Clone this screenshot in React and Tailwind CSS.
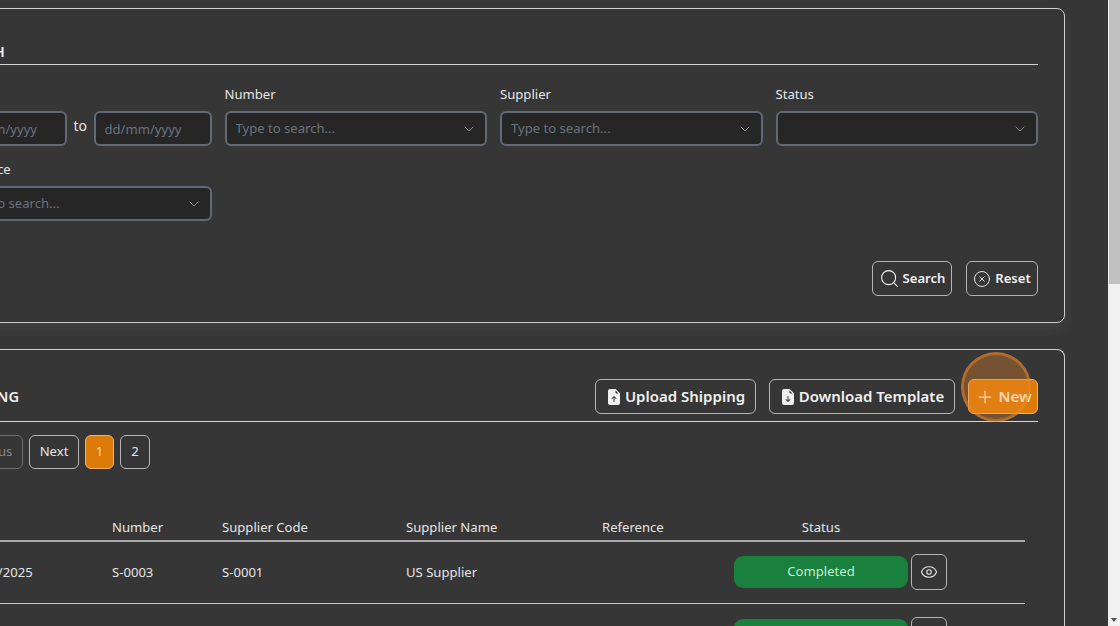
import React from "react";
import { ChevronDown, Plus, Search, CircleX, Eye } from "lucide-react";
import { BsFileEarmarkArrowUpFill, BsFileEarmarkArrowDownFill } from "react-icons/bs";

function Combo({ label, placeholder }) {
  return (
    <div className="flex flex-col">
      <label className="h-[28px] pt-[1px] text-[13.1px] leading-[20px] text-[#e5e5e5]">{label}</label>
      <div className="flex h-[35px] items-center justify-between rounded-md border-2 border-[#636974] bg-[#262626] pl-[9px] pr-[8px]">
        <span className="truncate text-[13.1px] text-[#6b7280]">{placeholder}</span>
        <ChevronDown size={16} strokeWidth={1.5} className="shrink-0 text-[#8e8e8e]" />
      </div>
    </div>
  );
}

function DateBox() {
  return (
    <input
      placeholder="dd/mm/yyyy"
      className="h-[35px] w-[118px] min-w-0 rounded-md border-2 border-[#636974] bg-[#262626] px-[9px] text-[13.1px] text-[#e5e5e5] outline-none placeholder:text-[#6b7280]"
    />
  );
}

function OutlineBtn({ children, className = "" }) {
  return (
    <button className={`flex h-[35px] items-center justify-center rounded-md border border-[#b5b5b5] font-semibold text-[#f0f0f0] ${className}`}>
      {children}
    </button>
  );
}

function Row({ date, number, code, name, first }) {
  const text = "pt-[13px] pb-[12px] px-2";
  const pad = first ? "pt-3 pb-[13px]" : "pt-[13px] pb-[13px]";
  return (
    <tr className="border-b border-[#c9c9c9]">
      <td className={`${text} !pl-[14px]`}>{date}</td>
      <td className={text}>{number}</td>
      <td className={text}>{code}</td>
      <td className={text}>{name}</td>
      <td className={text}></td>
      <td className={`${pad} pl-2`}>
        <div className="flex h-[32px] items-center justify-center rounded-[9px] bg-[#19803d] pt-px text-[#c4eed2]">Completed</div>
      </td>
      <td className={`${pad} pl-[3px]`}>
        <button className="flex h-[36px] w-[36px] items-center justify-center rounded-md border border-[#b5b5b5] text-[#e5e5e5]">
          <Eye size={18} strokeWidth={1.5} />
        </button>
      </td>
      <td></td>
    </tr>
  );
}

export default function App() {
  return (
    <div className="flex h-[626px] w-[1120px] overflow-hidden bg-[#363636] text-[13.1px] text-[#e5e5e5] [font-family:'Noto_Sans',sans-serif]">
      <main className="h-full min-w-0 flex-1 overflow-hidden">
        <div className="ml-[-78px] mr-[43px] flex flex-col gap-[26px] pt-2">
          <section className="rounded-lg border border-[#cfcfcf] px-[26px] pb-[26px] pt-[26px] shadow-[0_6px_14px_rgba(255,255,255,0.07)]">
            <h2 className="h-[30px] border-b border-[#d4d4d4] text-[14.6px] font-semibold leading-[32px] text-[#f0f0f0]">SEARCH</h2>
            <div className="mt-[18px] grid grid-cols-4 gap-x-[13px] gap-y-[12px]">
              <div className="flex flex-col">
                <label className="h-[28px] pt-[1px] leading-[20px]">Date</label>
                <div className="flex items-center justify-between">
                  <DateBox />
                  <span className="pb-[7px] text-[14px]">to</span>
                  <DateBox />
                </div>
              </div>
              <Combo label="Number" placeholder="Type to search..." />
              <Combo label="Supplier" placeholder="Type to search..." />
              <Combo label="Status" placeholder="" />
              <Combo label="Reference" placeholder="Type to search..." />
            </div>
            <div className="mt-[40px] flex justify-end gap-[14px]">
              <OutlineBtn className="w-[80px] gap-[3px] text-[13.1px]"><Search size={21} strokeWidth={1.25} />Search</OutlineBtn>
              <OutlineBtn className="w-[72px] gap-[4px] text-[13.1px]"><CircleX size={18} strokeWidth={1.25} />Reset</OutlineBtn>
            </div>
          </section>

          <section className="rounded-t-lg border border-b-0 border-[#cfcfcf] px-[26px] pt-[29px]">
            <div className="flex items-center justify-between border-b border-[#d4d4d4] pb-[7px]">
              <h2 className="text-[14.6px] font-semibold text-[#f0f0f0]">SHIPPING</h2>
              <div className="flex gap-[13px] text-[15px]">
                <OutlineBtn className="w-[161px] gap-[3px]"><BsFileEarmarkArrowUpFill size={16} />Upload Shipping</OutlineBtn>
                <OutlineBtn className="w-[186px] gap-[3px]"><BsFileEarmarkArrowDownFill size={16} />Download Template</OutlineBtn>
                <button className="flex h-[35px] w-[70px] items-center justify-center gap-[4px] rounded-md border border-[#eeb46e] bg-[#dd7b08] font-semibold text-white">
                  <Plus size={20} strokeWidth={1.5} />New
                </button>
              </div>
            </div>
            <div className="mt-[13px] flex gap-[6px]">
              <button className="h-[34px] w-[74px] rounded-md border border-[#6f6f6f] text-[#8a8a8a]">Previous</button>
              <button className="h-[34px] w-[50px] rounded-md border border-[#b5b5b5]">Next</button>
              <button className="h-[34px] w-[29px] rounded-md border border-[#eeb46e] bg-[#dd7b08] text-[#f7dcc0]">1</button>
              <button className="h-[34px] w-[30px] rounded-md border border-[#b5b5b5]">2</button>
            </div>
            <table className="mt-[49px] w-[1076px] table-fixed border-collapse text-left">
              <colgroup>
                <col className="w-[155px]" />
                <col className="w-[110px]" />
                <col className="w-[184px]" />
                <col className="w-[196px]" />
                <col className="w-[132px]" />
                <col className="w-[182px]" />
                <col className="w-[39px]" />
                <col />
              </colgroup>
              <thead>
                <tr className="border-b-2 border-[#a8a8a8]">
                  <th className="pb-[2px] pl-[14px] pr-2 font-normal">Date</th>
                  <th className="px-2 pb-[2px] font-normal">Number</th>
                  <th className="px-2 pb-[2px] font-normal">Supplier Code</th>
                  <th className="px-2 pb-[2px] font-normal">Supplier Name</th>
                  <th className="px-2 pb-[2px] font-normal">Reference</th>
                  <th className="pb-[2px] pl-2 text-center font-normal">Status</th>
                  <th></th>
                  <th></th>
                </tr>
              </thead>
              <tbody>
                <Row first date="12/05/2025" number="S-0003" code="S-0001" name="US Supplier" />
                <Row date="12/05/2025" number="S-0002" code="S-0001" name="US Supplier" />
              </tbody>
            </table>
          </section>
        </div>
      </main>

      <div className="relative h-full w-[12px] shrink-0 bg-[#f1f1f1] pl-px">
        <div className="h-[284px] bg-[#c1c1c1]"></div>
        <div className="absolute bottom-[4px] left-[3px] h-0 w-0 border-x-[3px] border-t-[4px] border-x-transparent border-t-[#505050]"></div>
      </div>

      <div className="pointer-events-none absolute left-[961px] top-[352px] h-[70px] w-[70px] rounded-full border-[3px] border-[#e9872a]/50 bg-[#e9872a]/35"></div>
    </div>
  );
}
